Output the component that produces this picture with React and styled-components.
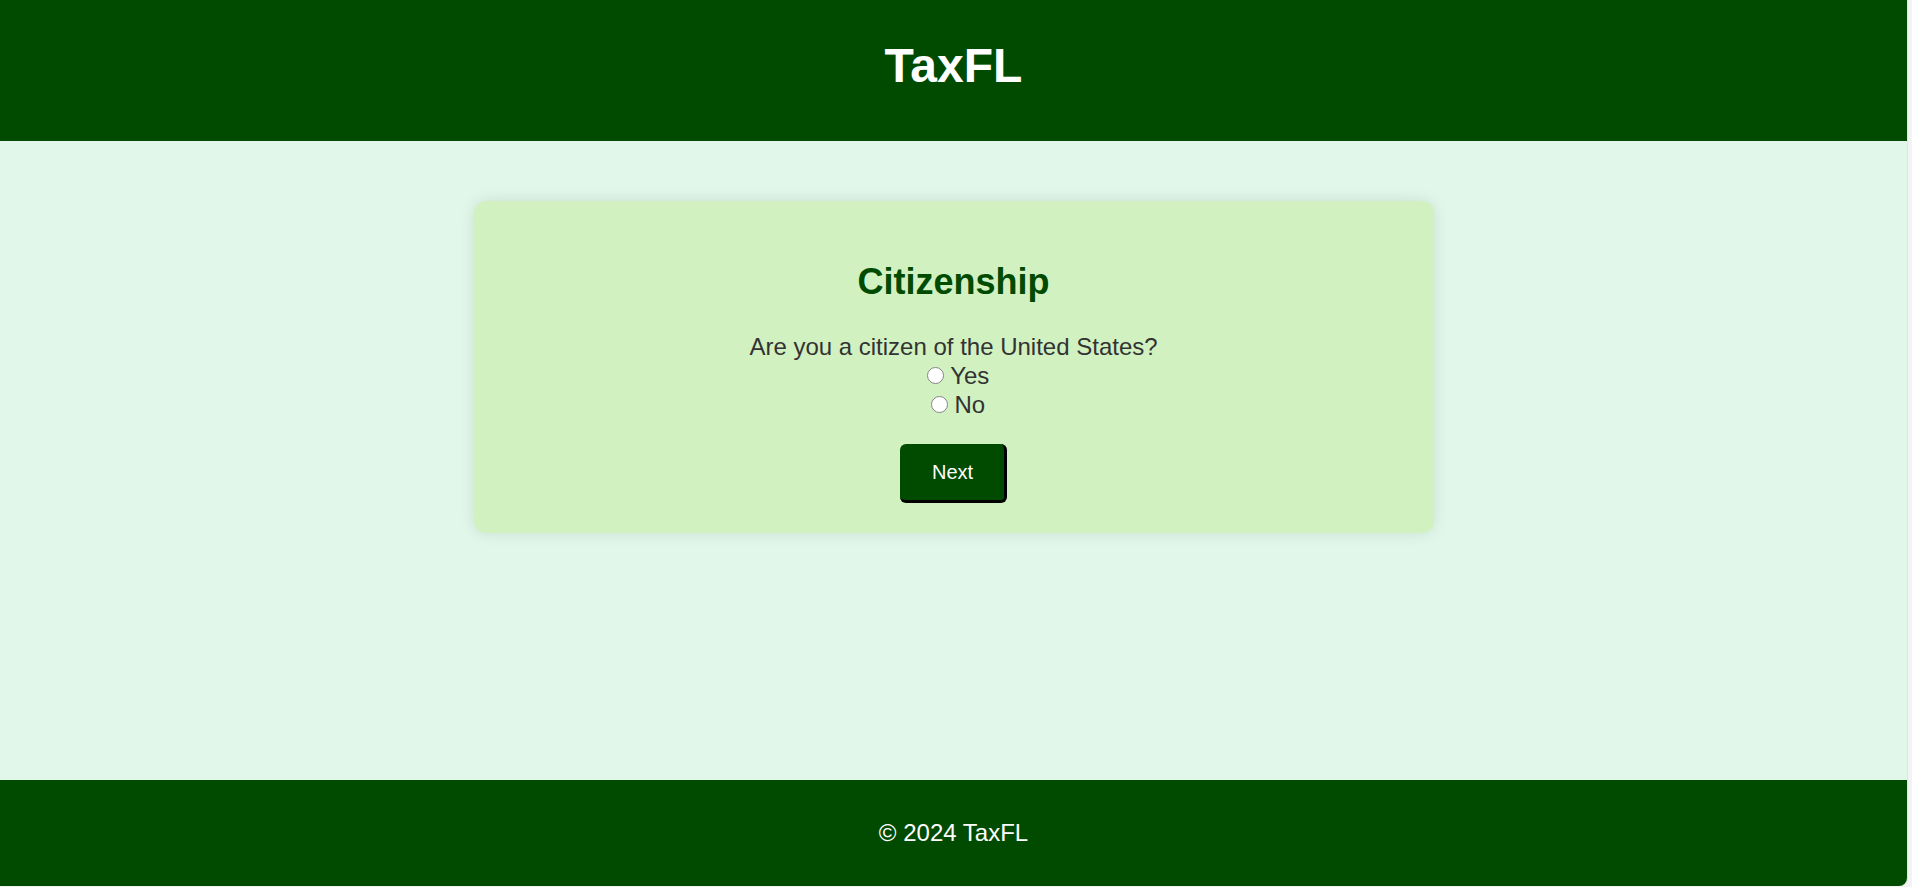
import React from "react";
import styled, { createGlobalStyle } from "styled-components";

const GlobalStyle = createGlobalStyle`
  * {
    box-sizing: border-box;
  }
  body {
    margin: 0;
    background-color: #f3f3f3;
    font-family: "Liberation Sans", Arial, sans-serif;
  }
`;

const App = () => {
  const [citizen, setCitizen] = React.useState("");

  return (
    <>
      <GlobalStyle />
      <PageFrame>
        <Header>
          <h1>TaxFL</h1>
        </Header>
        <Main>
          <Card>
            <h2>Citizenship</h2>
            <Question>Are you a citizen of the United States?</Question>
            <Option $offset={9}>
              <Radio
                type="radio"
                name="citizen"
                value="yes"
                checked={citizen === "yes"}
                onChange={() => setCitizen("yes")}
              />
              Yes
            </Option>
            <Option $offset={9}>
              <Radio
                type="radio"
                name="citizen"
                value="no"
                checked={citizen === "no"}
                onChange={() => setCitizen("no")}
              />
              No
            </Option>
            <Actions>
              <NextButton type="button">Next</NextButton>
            </Actions>
          </Card>
        </Main>
        <Footer>
          <p>© 2024 TaxFL</p>
        </Footer>
      </PageFrame>
    </>
  );
};

const PageFrame = styled.div`
  display: flex;
  flex-direction: column;
  min-height: calc(100vh - 1px);
  margin-right: 5px;
  background-color: #e0f7ea;
  border-bottom-right-radius: 8px;
  overflow: hidden;
  box-shadow: 1px 0 0 #e2e2e2;
`;

const Header = styled.header`
  background-color: #004b00;
  padding: 38px 0 47px;
  text-align: center;

  h1 {
    margin: 0;
    color: #fff;
    font-size: 48px;
    line-height: 56px;
    font-weight: bold;
  }
`;

const Main = styled.main`
  flex: 1;
  padding-top: 60px;
`;

const Card = styled.section`
  max-width: 960px;
  margin: 0 auto;
  padding: 30px;
  background-color: #d1f1c1;
  border-radius: 12px;
  box-shadow: 0 0 15px rgba(0, 0, 0, 0.1);
  text-align: center;

  h2 {
    margin: 30px 0;
    color: #004b00;
    font-size: 36px;
    line-height: 41px;
    font-weight: bold;
  }
`;

const Question = styled.p`
  margin: 0;
  color: #333;
  font-size: 24px;
  line-height: 29px;
`;

const Option = styled.label`
  display: block;
  color: #333;
  font-size: 24px;
  line-height: 29px;
  cursor: pointer;

  input {
    margin-left: ${(props) => props.$offset}px;
  }
`;

const Radio = styled.input`
  appearance: none;
  display: inline-block;
  width: 17px;
  height: 17px;
  margin: 0 6.5px 0 0;
  vertical-align: baseline;
  border: 1px solid #858585;
  border-radius: 50%;
  background-color: #fff;
  cursor: pointer;

  &:checked {
    border-color: #004b00;
    background: radial-gradient(circle, #004b00 0 4px, #fff 4.5px);
  }
`;

const Actions = styled.div`
  margin-top: 25px;
`;

const NextButton = styled.button`
  padding: 16px 31px 16px 32px;
  border: none;
  border-right: 3px solid #000;
  border-bottom: 3px solid #000;
  border-radius: 6px;
  background-color: #004b00;
  color: #fff;
  font-family: "Liberation Sans", Arial, sans-serif;
  font-size: 20px;
  line-height: 24px;
  cursor: pointer;

  &:hover {
    background-color: #006400;
  }
`;

const Footer = styled.footer`
  background-color: #004b00;
  padding: 39px 0;
  text-align: center;

  p {
    margin: 0;
    color: #fff;
    font-size: 24px;
    line-height: 28px;
  }
`;

export default App;
